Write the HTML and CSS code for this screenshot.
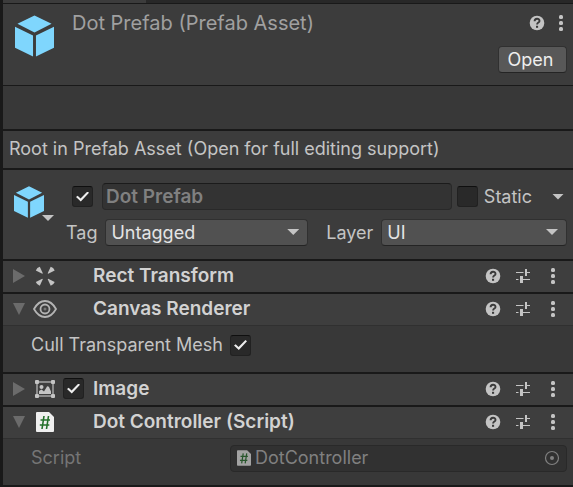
FILE: index.html
```html
<!DOCTYPE html>
<html lang="en">
<head>
<meta charset="utf-8">
<title>Inspector</title>
<link rel="stylesheet" href="styles.css">
</head>
<body>
<svg class="defs" aria-hidden="true">
  <symbol id="cube" viewBox="0 0 40 42">
    <path d="M20 0 37.500 8.500 20 17.500 2.500 8.500ZM0 11.500 18.500 20.500V42L0 33ZM40 11.500 21.500 20.500V42L40 33Z" fill="#7fd6fd"/>
  </symbol>
  <symbol id="help" viewBox="0 0 16 16">
    <circle cx="8" cy="8" r="7.300" fill="#c4c4c4"/>
    <path d="M5.600 6.200C5.600 2.900 10.500 3 10.500 5.900 10.500 7.700 8.100 7.500 8.100 9.500" fill="none" stroke="#3a3a3a" stroke-width="1.900"/>
    <rect x="7" y="10.800" width="2.100" height="2" fill="#3a3a3a"/>
  </symbol>
  <symbol id="preset" viewBox="0 0 16 16">
    <path d="M1 4.500h7.500M10 4.500h5M1 11.500h2.500M6 11.500h9" stroke="#c4c4c4" stroke-width="1.200"/>
    <path d="M11 1v7" stroke="#c4c4c4" stroke-width="2"/>
    <path d="M6.500 8v7" stroke="#c4c4c4" stroke-width="3"/>
  </symbol>
  <symbol id="more" viewBox="0 0 16 16">
    <g fill="#c4c4c4"><rect x="6" y="0" width="4" height="4" rx="1.500"/><rect x="6" y="6" width="4" height="4" rx="1.500"/><rect x="6" y="12" width="4" height="4" rx="1.500"/></g>
  </symbol>
  <symbol id="right" viewBox="0 0 12 14"><path d="M0 0 12 7 0 14Z" fill="#6b6b6b"/></symbol>
  <symbol id="down" viewBox="0 0 12 12"><path d="M0 0H12L6 12Z" fill="#6b6b6b"/></symbol>
  <symbol id="script" viewBox="0 0 18 20">
    <path d="M1 0H13L18 5V19Q18 20 17 20H1Q0 20 0 19V1Q0 0 1 0Z" fill="#efefef"/>
    <path d="M8 4 6 17M12.500 4 10.500 17M4.500 8H14M3.800 13H13.300" stroke="#24702b" stroke-width="1.600"/>
  </symbol>
</svg>
<main class="inspector">
  <div class="tabs"><div class="tab"></div></div>

  <header class="asset">
    <svg class="cube-large" aria-hidden="true"><use href="#cube"/></svg>
    <h1>Dot Prefab (Prefab Asset)</h1>
    <div class="asset-side">
      <div class="asset-tools">
        <button class="icon" aria-label="Help"><svg><use href="#help"/></svg></button>
        <button class="icon" aria-label="More"><svg><use href="#more"/></svg></button>
      </div>
      <button class="open">Open</button>
    </div>
  </header>
  <div class="spacer"></div>
  <p class="note">Root in Prefab Asset (Open for full editing support)</p>

  <section class="object">
    <button class="object-icon" aria-label="Select icon">
      <svg class="cube-small"><use href="#cube"/></svg>
      <span class="arrow corner"></span>
    </button>
    <div class="object-fields">
      <div class="line name-line">
        <input type="checkbox" class="check" aria-label="Active" checked>
        <input type="text" class="name" aria-label="Name" value="Dot Prefab" disabled>
        <input type="checkbox" class="check" id="static">
        <label for="static" class="static">Static</label>
        <button class="static-menu" aria-label="Static options"><span class="arrow"></span></button>
      </div>
      <div class="line select-line">
        <label for="tag">Tag</label>
        <div class="select"><select id="tag"><option>Untagged</option></select><span class="arrow"></span></div>
        <label for="layer" class="layer">Layer</label>
        <div class="select"><select id="layer"><option>UI</option></select><span class="arrow"></span></div>
      </div>
    </div>
  </section>

  <section class="component">
    <div class="bar">
      <button class="fold" aria-label="Expand"><svg><use href="#right"/></svg></button>
      <svg class="type" viewBox="0 0 24 24" aria-hidden="true">
        <g fill="#c4c4c4"><path id="petal" d="M2.800 6.500Q4 3.500 6.800 2.800L9.800 9.300 9.300 9.800Z"/><use href="#petal" transform="matrix(-1 0 0 1 24.500 0)"/><use href="#petal" transform="matrix(1 0 0 -1 0 24.500)"/><use href="#petal" transform="matrix(-1 0 0 -1 24.500 24.500)"/></g>
      </svg>
      <h2>Rect Transform</h2>
      <button class="icon" aria-label="Help"><svg><use href="#help"/></svg></button>
      <button class="icon" aria-label="Presets"><svg><use href="#preset"/></svg></button>
      <button class="icon" aria-label="More"><svg><use href="#more"/></svg></button>
    </div>
  </section>

  <section class="component">
    <div class="bar">
      <button class="fold" aria-label="Collapse"><svg><use href="#down"/></svg></button>
      <svg class="type" viewBox="0 0 24 24" aria-hidden="true">
        <g fill="none" stroke="#b4b4b4" stroke-width="1.800"><path d="M1 12Q5.500 4 12 4T23 12Q18.500 20 12 20T1 12Z"/><circle cx="12" cy="12" r="4.500"/></g><circle cx="12" cy="12" r="1.500" fill="#777"/>
      </svg>
      <h2>Canvas Renderer</h2>
      <button class="icon" aria-label="Help"><svg><use href="#help"/></svg></button>
      <button class="icon" aria-label="Presets"><svg><use href="#preset"/></svg></button>
      <button class="icon" aria-label="More"><svg><use href="#more"/></svg></button>
    </div>
    <div class="body">
      <label class="prop" for="cull">Cull Transparent Mesh</label>
      <input type="checkbox" class="check" id="cull" checked>
    </div>
  </section>

  <section class="component">
    <div class="bar">
      <button class="fold" aria-label="Expand"><svg><use href="#right"/></svg></button>
      <svg class="type" viewBox="0 0 24 24" aria-hidden="true">
        <rect x="4" y="5" width="16" height="14" fill="none" stroke="#b4b4b4" stroke-width="1.300"/>
        <g fill="#c4c4c4"><rect x="2" y="3" width="4" height="4" rx="1"/><rect x="18" y="3" width="4" height="4" rx="1"/><rect x="2" y="17" width="4" height="4" rx="1"/><rect x="18" y="17" width="4" height="4" rx="1"/><circle cx="8.500" cy="10" r="2"/><path d="M6 17V14L8.500 12.500 11 14.500 14 9.500Q15 9 16 10L18 14.500V17Z"/></g>
      </svg>
      <input type="checkbox" class="check" aria-label="Image enabled" checked>
      <h2>Image</h2>
      <button class="icon" aria-label="Help"><svg><use href="#help"/></svg></button>
      <button class="icon" aria-label="Presets"><svg><use href="#preset"/></svg></button>
      <button class="icon" aria-label="More"><svg><use href="#more"/></svg></button>
    </div>
  </section>

  <section class="component">
    <div class="bar">
      <button class="fold" aria-label="Collapse"><svg><use href="#down"/></svg></button>
      <svg class="type" viewBox="0 0 24 24" aria-hidden="true"><use href="#script" x="3" y="2" width="18" height="20"/></svg>
      <h2>Dot Controller (Script)</h2>
      <button class="icon" aria-label="Help"><svg><use href="#help"/></svg></button>
      <button class="icon" aria-label="Presets"><svg><use href="#preset"/></svg></button>
      <button class="icon" aria-label="More"><svg><use href="#more"/></svg></button>
    </div>
    <div class="body script-body">
      <label class="prop" for="source">Script</label>
      <div class="object-field">
        <svg class="file" aria-hidden="true"><use href="#script"/></svg>
        <input type="text" id="source" value="DotController" disabled>
        <button class="picker" aria-label="Pick object" disabled>
          <svg viewBox="0 0 16 16"><circle cx="8" cy="8" r="6.500" fill="none" stroke="#818181" stroke-width="1.200"/><circle cx="8" cy="8" r="2" fill="#818181"/></svg>
        </button>
      </div>
    </div>
  </section>
</main>
</body>
</html>
```
FILE: styles.css
```css
* { box-sizing: border-box; }
body {
  margin: 0;
  background: #383838;
  color: #c4c4c4;
  font: 18px/24px Inter, "Liberation Sans", sans-serif;
}
h1, h2, p { margin: 0; }
button, input, select { font: inherit; color: inherit; margin: 0; }
button { padding: 0; border: 0; background: none; }
svg { display: block; }
.defs { position: absolute; width: 0; height: 0; }

.inspector { border-left: 3px solid #191919; }
.tabs { height: 4px; background: #282828; border-bottom: 1px solid #191919; }
.tab { width: 25%; height: 3px; background: #3c3c3c; }

.asset {
  display: flex;
  height: 82px;
  padding: 11px 6px 0 12px;
  background: #3c3c3c;
  border-bottom: 1px solid #191919;
}
.cube-large { width: 39px; height: 42px; margin-right: 18px; }
.asset h1 { flex: 1; font-size: 20px; font-weight: 400; color: #a0a0a0; line-height: 16px; white-space: nowrap; }
.asset-side { display: flex; flex-direction: column; align-items: flex-end; gap: 15px; }
.asset-tools { display: flex; gap: 8px; margin-right: -2px; }
.icon { width: 16px; height: 16px; }
.icon svg { width: 16px; height: 16px; }
.open {
  width: 69px;
  height: 27px;
  background: #585858;
  border: 1px solid #303030;
  border-bottom-color: #242424;
  border-radius: 4px;
  color: #eee;
  padding-right: 4px;
}
.spacer { height: 45px; border-bottom: 2px solid #191919; }
.note { padding: 6px 6px 7px; min-height: 39px; background: #3c3c3c; border-bottom: 2px solid #191919; }

.object { display: flex; height: 91px; background: #3c3c3c; border-bottom: 2px solid #191919; padding: 13px 6px 0 11px; }
.object-icon { position: relative; width: 40px; height: 38px; flex: none; }
.cube-small { width: 30px; height: 32px; }
.arrow { display: block; width: 12px; height: 6px; background: #c4c4c4; clip-path: polygon(0 0, 100% 0, 50% 100%); }
.corner { position: absolute; right: 0; bottom: 0; }
.object-fields { flex: 1; min-width: 0; display: grid; gap: 9px; align-content: start; margin-left: 12px; }
.line { display: flex; align-items: center; height: 27px; }
.name-line { padding-left: 6px; }
.check {
  appearance: none;
  flex: none;
  width: 21px;
  height: 21px;
  display: grid;
  place-items: center;
  background: #292929;
  border: 1px solid #212121;
  border-top-color: #0f0f0f;
  border-radius: 3px;
}
.check:checked::before {
  content: "";
  width: 13px;
  height: 10px;
  background: #eee;
  clip-path: polygon(0 55%, 13% 43%, 35% 70%, 88% 0, 100% 12%, 37% 100%);
}
.name {
  flex: 1;
  min-width: 0;
  height: 27px;
  margin: 0 5px 0 9px;
  padding: 0 3px;
  background: #333;
  border: 1px solid #292929;
  border-top-color: #1b1b1b;
  border-radius: 4px;
  color: #808080;
  font-size: 19px;
  font-weight: 600;
}
.static { margin-left: 6px; flex: none; }
.static-menu { margin: 0 3px 0 20px; }
.select-line label { margin-right: 8px; }
.select-line .layer { margin-left: 18px; }
.select { position: relative; flex: 201 1 0; min-width: 0; }
.layer + .select { flex-grow: 184; }
.select select {
  appearance: none;
  display: block;
  width: 100%;
  height: 27px;
  padding: 0 5px;
  background: #515151;
  border: 1px solid #303030;
  border-bottom-color: #242424;
  border-radius: 4px;
  color: #e4e4e4;
}
.select .arrow { position: absolute; right: 9px; top: 10px; pointer-events: none; }

.component { border-bottom: 2px solid #191919; }
.bar { display: flex; align-items: center; height: 31px; padding: 0 12px 2px 10px; background: #3e3e3e; }
.bar .icon { margin-left: 14px; }
.fold { width: 12px; height: 14px; }
.fold svg { width: 12px; height: 14px; }
.type { width: 24px; height: 24px; margin: 0 6px 0 8px; flex: none; }
.bar h2 { flex: 1; font-size: 19px; line-height: 24px; font-weight: 600; color: #d2d2d2; }
.type + h2 { margin-left: 30px; }
.check + h2 { margin-left: 9px; }
.body { display: flex; align-items: center; height: 47px; padding: 0 6px 8px 28px; border-top: 1px solid #303030; }
.prop { width: 199px; flex: none; white-space: nowrap; }
.script-body { color: #808080; }
.script-body .prop { color: #757575; }
.object-field {
  display: flex;
  align-items: center;
  flex: 1;
  min-width: 0;
  height: 27px;
  padding: 0 6px;
  background: #313131;
  border: 1px solid #292929;
  border-radius: 4px;
}
.file { width: 14px; height: 16px; opacity: 0.6; flex: none; }
.object-field input { flex: 1; min-width: 0; height: 24px; padding: 0 4px; border: 0; background: none; color: #808080; }
.picker svg { width: 16px; height: 16px; }
```
